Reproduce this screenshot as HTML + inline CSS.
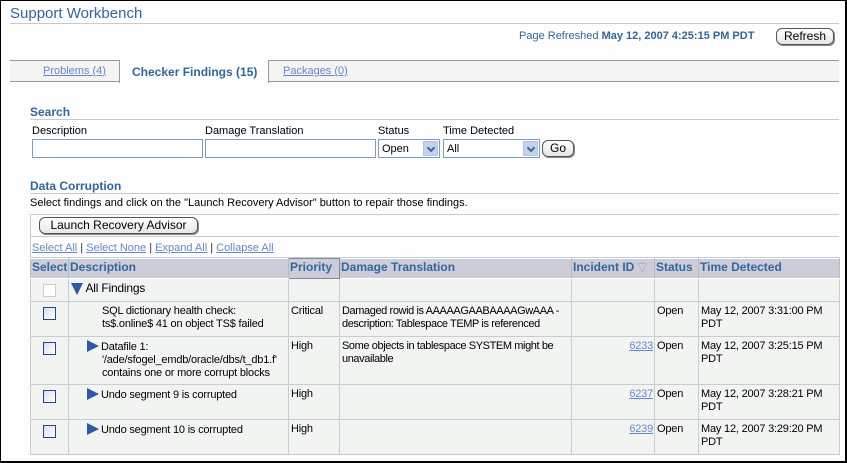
<!DOCTYPE html>
<html><head><style>
*{margin:0;padding:0;box-sizing:border-box}
body{width:847px;height:463px;overflow:hidden;background:#fcfdfc;font-family:"Liberation Sans",sans-serif;font-size:11px;color:#000;position:relative;border:1px solid #000;border-width:1px 2px 2px 1px}
.a{position:absolute;white-space:nowrap}
.h{color:#336699;font-weight:bold}
a,.lk{color:#6688cc;text-decoration:underline}
.btn{position:absolute;border:1px solid #555;border-radius:6px;background:linear-gradient(#fff,#e6e6e6);font-size:12px;text-align:center;box-shadow:1px 1px 0 #888}
.inp{position:absolute;border:1px solid #7f9db9;background:#fff;height:19px}
.sel{position:absolute;border:1px solid #7f9db9;background:#fff;height:19px;font-size:11px;padding:3px 0 0 3px}
.sel i{position:absolute;right:1px;top:1px;width:15px;height:15px;background:#c1d2ee;border:1px solid #b0c4e8}
.sel i:after{content:"";position:absolute;left:4px;top:3px;width:4px;height:4px;border-right:2px solid #4d6185;border-bottom:2px solid #4d6185;transform:rotate(45deg)}
table{position:absolute;left:29px;top:257px;border-collapse:collapse;width:809px;table-layout:fixed}
td,th{border:1px solid #c8ccd4;vertical-align:top;padding:3px 1px 0 2px;font-size:11px;line-height:13px;background:#f2f4f2;white-space:nowrap;overflow:hidden;letter-spacing:-0.2px}
th{background:#cccdd9;color:#336699;text-align:left;font-weight:bold;font-size:12px;height:20px;padding:2px 1px;border-color:#fff #bbb;letter-spacing:0}
.cb{display:inline-block;width:13px;height:13px;border:1px solid #1c4a8a;background:linear-gradient(135deg,#dde,#fff);margin:2px 0 0 10px}
.ex{display:inline-block;width:0;height:0;border-left:12px solid #2a5aa8;border-top:6px solid transparent;border-bottom:6px solid transparent;vertical-align:-2px;margin-right:2px;position:relative}
</style></head><body>
<div class="a" style="left:9px;top:4px;font-size:15px;color:#336699">Support Workbench</div>
<div class="a" style="left:9px;top:22px;width:829px;height:1px;background:#c7c9cf"></div>
<div class="a" style="left:518px;top:29px;color:#336699">Page Refreshed <b>May 12, 2007 4:25:15 PM PDT</b></div>
<div class="btn" style="left:775px;top:27px;width:58px;height:17px;line-height:15px">Refresh</div>
<div class="a" style="left:9px;top:59px;width:829px;height:22px;background:#f3f4f3;border-top:1px solid #999;border-bottom:1px solid #999"></div>
<div class="a" style="left:118px;top:59px;width:150px;height:23px;background:#fcfdfc;border:1px solid #999;border-top:none;border-bottom:none"></div>
<div class="a lk" style="left:42px;top:64px">Problems (4)</div>
<div class="a h" style="left:131px;top:64px;font-size:12px">Checker Findings (15)</div>
<div class="a lk" style="left:282px;top:64px">Packages (0)</div>
<div class="a h" style="left:29px;top:104px;font-size:12px">Search</div>
<div class="a" style="left:29px;top:118px;width:809px;height:1px;background:#c7c9cf"></div>
<div class="a" style="left:31px;top:124px">Description</div>
<div class="a" style="left:204px;top:124px">Damage Translation</div>
<div class="a" style="left:377px;top:124px">Status</div>
<div class="a" style="left:442px;top:124px">Time Detected</div>
<div class="inp" style="left:31px;top:138px;width:171px"></div>
<div class="inp" style="left:204px;top:138px;width:171px"></div>
<div class="sel" style="left:377px;top:138px;width:62px">Open<i></i></div>
<div class="sel" style="left:442px;top:138px;width:97px">All<i></i></div>
<div class="btn" style="left:541px;top:139px;width:32px;height:17px;line-height:15px">Go</div>
<div class="a h" style="left:29px;top:178px;font-size:12px">Data Corruption</div>
<div class="a" style="left:29px;top:192px;width:809px;height:1px;background:#c7c9cf"></div>
<div class="a" style="left:29px;top:196px">Select findings and click on the "Launch Recovery Advisor" button to repair those findings.</div>
<div class="a" style="left:29px;top:213px;width:809px;height:44px;border:1px solid #c8ccd4;border-right:none"></div>
<div class="a" style="left:29px;top:235px;width:809px;height:1px;background:#c8ccd4"></div>
<div class="btn" style="left:38px;top:216px;width:159px;height:17px;line-height:15px">Launch Recovery Advisor</div>
<div class="a" style="left:31px;top:241px;color:#333"><span class="lk">Select All</span> | <span class="lk">Select None</span> | <span class="lk">Expand All</span> | <span class="lk">Collapse All</span></div>
<table>
<colgroup><col style="width:38px"><col style="width:220px"><col style="width:51px"><col style="width:232px"><col style="width:83px"><col style="width:44px"><col style="width:141px"></colgroup>
<tr><th style="padding-left:1px">Select</th><th>Description</th><th style="border:1px solid #888">Priority</th><th>Damage Translation</th><th>Incident ID <span style="color:#aab;font-weight:normal">▽</span></th><th>Status</th><th>Time Detected</th></tr>
<tr style="height:21px"><td><span class="cb" style="border-color:#ccc;background:#fff"></span></td><td style="font-size:12px"><span style="display:inline-block;border-top:12px solid #2a5aa8;border-left:6px solid transparent;border-right:6px solid transparent;vertical-align:-3px"></span> All Findings</td><td></td><td></td><td></td><td></td><td></td></tr>
<tr style="height:35px"><td><span class="cb"></span></td><td style="padding-left:33px">SQL dictionary health check:<br>ts$.online$ 41 on object TS$ failed</td><td>Critical</td><td style="letter-spacing:-0.4px">Damaged rowid is AAAAAGAABAAAAGwAAA -<br>description: Tablespace TEMP is referenced</td><td></td><td>Open</td><td>May 12, 2007 3:31:00 PM<br>PDT</td></tr>
<tr style="height:48px"><td><span class="cb"></span></td><td style="padding-left:18px"><span class="ex"></span>Datafile 1:<br><span style="padding-left:15px">'/ade/sfogel_emdb/oracle/dbs/t_db1.f'</span><br><span style="padding-left:15px">contains one or more corrupt blocks</span></td><td>High</td><td style="letter-spacing:-0.4px">Some objects in tablespace SYSTEM might be<br>unavailable</td><td style="text-align:right"><span class="lk">6233</span></td><td>Open</td><td>May 12, 2007 3:25:15 PM<br>PDT</td></tr>
<tr style="height:35px"><td><span class="cb"></span></td><td style="padding-left:18px"><span class="ex"></span>Undo segment 9 is corrupted</td><td>High</td><td></td><td style="text-align:right"><span class="lk">6237</span></td><td>Open</td><td>May 12, 2007 3:28:21 PM<br>PDT</td></tr>
<tr style="height:35px"><td><span class="cb"></span></td><td style="padding-left:18px"><span class="ex"></span>Undo segment 10 is corrupted</td><td>High</td><td></td><td style="text-align:right"><span class="lk">6239</span></td><td>Open</td><td>May 12, 2007 3:29:20 PM<br>PDT</td></tr>
</table>
</body></html>
